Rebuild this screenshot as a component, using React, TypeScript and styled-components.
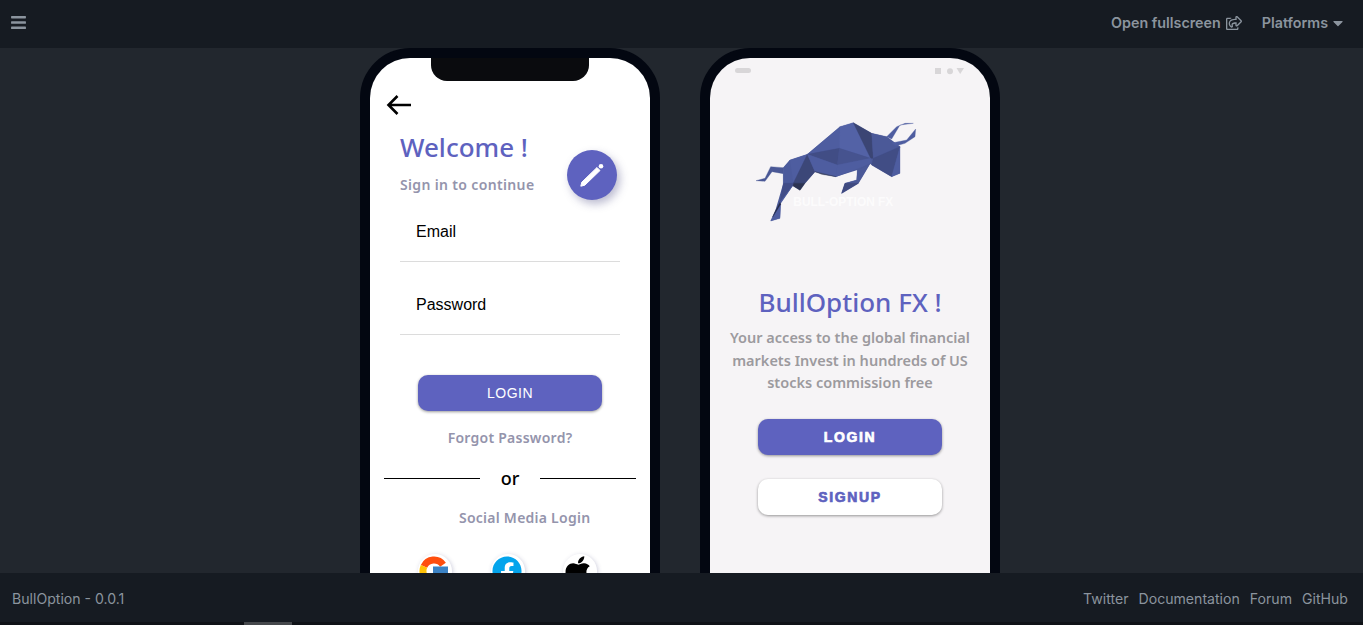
import styled, { createGlobalStyle } from 'styled-components';
import { FaApple, FaBars, FaCaretDown, FaFacebook, FaRegShareSquare } from 'react-icons/fa';

const GlobalStyle = createGlobalStyle`
  html, body { margin: 0; height: 100%; background: #22272e; }
  * { box-sizing: border-box; }
`;

const Page = styled.div`
  height: 625px;
  display: flex;
  flex-direction: column;
  overflow: hidden;
  font-family: Inter, 'Liberation Sans', sans-serif;
`;

const Header = styled.header`
  flex: 0 0 48px;
  background: #161b22;
  display: flex;
  align-items: center;
  justify-content: space-between;
  padding: 0 17px 3px 10px;
  color: #8b949e;
`;

const HeaderLinks = styled.nav`
  display: flex;
  align-items: center;
  gap: 20px;
`;

const HeaderLink = styled.span<{ $gap: number }>`
  display: flex;
  align-items: center;
  gap: ${p => p.$gap}px;
  font-size: 14.3px;
  font-weight: 600;
`;

const Stage = styled.main`
  flex: 1;
  min-height: 0;
  display: flex;
  justify-content: center;
  gap: 40px;
  padding-right: 3px;
  overflow: hidden;
`;

const Phone = styled.div`
  position: relative;
  flex: 0 0 300px;
  height: 620px;
  padding: 10px;
  background: #030711;
  border-radius: 50px;
`;

const Screen = styled.div<{ $bg: string }>`
  height: 100%;
  border-radius: 40px;
  background: ${p => p.$bg};
  font-family: 'Noto Sans', 'Open Sans', sans-serif;
`;

const Notch = styled.div`
  position: absolute;
  top: 10px;
  left: 71px;
  width: 158px;
  height: 23px;
  background: #0a0b0e;
  border-radius: 0 0 16px 16px;
`;

const LoginScreen = styled(Screen)`
  padding: 36px 0 0;
`;

const BackIcon = styled.svg`
  display: block;
  margin-left: 16px;
`;

const Intro = styled.div`
  margin: 14px 0 0 30px;
`;

const Welcome = styled.h1`
  margin: 0;
  font-size: 26px;
  line-height: 34px;
  font-weight: 500;
  color: #5e62bf;
`;

const Subtle = styled.p`
  margin: 0;
  font-size: 14px;
  font-weight: 600;
  letter-spacing: 0.25px;
  color: #9494ac;
`;

const SignIn = styled(Subtle)`
  margin-top: 11px;
  line-height: 20px;
  letter-spacing: 0.35px;
`;

const Fab = styled.div`
  position: absolute;
  top: 102px;
  left: 207px;
  width: 50px;
  height: 50px;
  border-radius: 50%;
  background: #5e62bf;
  box-shadow: 3px 4px 8px rgba(60, 60, 120, 0.35);
  display: flex;
  align-items: center;
  justify-content: center;
`;

const Field = styled.div`
  margin: 0 30px;
  padding: 0 16px;
  display: flex;
  align-items: center;
  border-bottom: 1px solid #dcdcdc;
  font-family: 'Liberation Sans', Arial, sans-serif;
  font-size: 16px;
  color: #000;
`;

const FirstField = styled(Field)`
  height: 67px;
  padding-top: 7px;
`;

const LastField = styled(Field)`
  height: 73px;
  padding-top: 14px;
`;

const Button = styled.div`
  width: 184px;
  height: 36px;
  border-radius: 10px;
  display: flex;
  align-items: center;
  justify-content: center;
  box-shadow: 0 1px 3px rgba(0, 0, 0, 0.4);
`;

const PlainButton = styled(Button)`
  margin: 40px auto 0;
  background: #5e62bf;
  color: #fff;
  font-family: 'Liberation Sans', Arial, sans-serif;
  font-size: 14px;
  letter-spacing: 0.5px;
`;

const Forgot = styled(Subtle)`
  margin-top: 17px;
  line-height: 20px;
  text-align: center;
`;

const OrRow = styled.div`
  margin: 20px 14px 0;
  display: grid;
  grid-template-columns: 96px 1fr 96px;
  align-items: center;
  font-size: 18px;
  line-height: 20px;
  font-weight: 500;
  text-align: center;
  color: #000;
`;

const OrLine = styled.div`
  height: 1px;
  background: #000;
`;

const SocialTitle = styled(Subtle)`
  margin: 20px 0 0 89px;
  line-height: 20px;
`;

const SocialRow = styled.div`
  margin: 27px 0 0 48px;
  display: flex;
  gap: 38.5px;
`;

const SocialBadge = styled.div`
  width: 34px;
  height: 34px;
  padding-left: 1px;
  border-radius: 50%;
  background: #fff;
  box-shadow: 1px 1px 4px rgba(60, 60, 120, 0.25);
  display: flex;
  align-items: center;
  margin-top: -1px;
`;

const AppleIcon = styled(FaApple)`
  flex: none;
  margin-left: -3px;
`;

const StatusBar = styled.div`
  height: 27px;
  padding: 10px 25px 0 25px;
  display: flex;
  justify-content: space-between;
  align-items: flex-start;
`;

const StatusPill = styled.div`
  width: 16px;
  height: 5px;
  border-radius: 3px;
  background: #d8d6d8;
`;

const StatusIcons = styled.svg`
  display: block;
`;

const Bull = styled.svg`
  display: block;
  margin: 30px 0 0 40px;
`;

const Title = styled.h2`
  margin: 55px 0 0;
  font-size: 26px;
  line-height: 34px;
  font-weight: 500;
  text-align: center;
  color: #5e62bf;
`;

const Blurb = styled.p`
  margin: 7px 15px 0;
  padding-bottom: 1px;
  font-size: 14.5px;
  line-height: 22.5px;
  font-weight: 600;
  text-align: center;
  color: #9c9a9e;
`;

const HeavyButton = styled(Button)<{ $light?: boolean }>`
  margin: 24px auto 0;
  background: ${p => (p.$light ? '#fff' : '#5e62bf')};
  color: ${p => (p.$light ? '#5e62bf' : '#fff')};
  font-family: 'Liberation Sans', Arial, sans-serif;
  font-size: 14px;
  font-weight: 700;
  letter-spacing: 1.6px;
  -webkit-text-stroke: 0.7px currentColor;
`;

const Footer = styled.footer`
  flex: 0 0 49px;
  background: #161b22;
  display: flex;
  align-items: center;
  justify-content: space-between;
  padding: 2px 15px 0 12px;
  font-size: 14.1px;
  color: #8b949e;
`;

const FooterLinks = styled.nav`
  display: flex;
  gap: 10px;
`;

const ScrollTrack = styled.div`
  flex: 0 0 3px;
  padding-left: 244px;
  background: #0f1217;
`;

const ScrollThumb = styled.div`
  width: 48px;
  height: 100%;
  background: #45484c;
`;

const silhouette =
  '100,158 120,135 172,118 270,35 310,23 365,55 410,65 450,95 450,175 425,185 365,150 360,146 340,180 325,205 275,235 285,205 320,195 322,165 258,185 195,170 165,205 150,226 128,212 92,265 90,310 62,318 75,290 100,205';

const facets: [string, string][] = [
  ['18,197 45,190 62,155 100,158 100,176 66,170 45,199', '#4a5896'],
  ['100,158 120,135 130,205 100,205', '#4b5a9c'],
  ['120,135 172,118 130,205', '#4e5da0'],
  ['172,118 195,170 165,205 130,205', '#3c4778'],
  ['130,205 165,205 150,226 128,212', '#2d3452'],
  ['100,205 130,205 128,212 90,262', '#414d88'],
  ['128,212 90,262 75,290 62,318 90,310 92,265', '#4e5da0'],
  ['75,290 90,262 92,268 68,306', '#232a48'],
  ['172,118 270,35 268,100', '#4e5da0'],
  ['270,35 310,23 362,130 268,100', '#5362a6'],
  ['310,23 365,55 370,130 362,130', '#3b4574'],
  ['172,118 268,100 262,150', '#414d85'],
  ['172,118 262,150 258,185 195,170', '#4e5da0'],
  ['195,170 258,185 215,178', '#2f3757'],
  ['268,100 362,130 262,150', '#46538f'],
  ['262,150 362,130 360,146 258,185', '#4e5da0'],
  ['360,146 340,180 325,205 275,235 285,205 320,195 322,165', '#4b5998'],
  ['285,205 325,205 275,235', '#3f4a80'],
  ['365,55 410,65 450,95 370,130', '#4b5998'],
  ['370,130 450,95 425,185 365,150', '#414d85'],
  ['450,95 450,175 425,185', '#4e5da0'],
  ['410,65 440,35 465,25 490,25 450,30 425,72', '#4e5da0'],
  ['425,84 470,75 497,42 495,65 465,85 437,93', '#4e5da0'],
];

const App = () => (
  <Page>
    <GlobalStyle />
    <Header>
      <FaBars size={17} />
      <HeaderLinks>
        <HeaderLink $gap={5}>
          Open fullscreen <FaRegShareSquare size={16} />
        </HeaderLink>
        <HeaderLink $gap={2}>
          Platforms <FaCaretDown size={16} />
        </HeaderLink>
      </HeaderLinks>
    </Header>
    <Stage>
      <Phone>
        <LoginScreen $bg='#fff'>
          <BackIcon width='26' height='22' viewBox='0 0 26 22' fill='none' stroke='#000' strokeWidth='2.6'>
            <path d='M25 11H3M11.5 2L2.5 11L11.5 20' />
          </BackIcon>
          <Intro>
            <Welcome>Welcome !</Welcome>
            <SignIn>Sign in to continue</SignIn>
          </Intro>
          <FirstField>Email</FirstField>
          <LastField>Password</LastField>
          <PlainButton>LOGIN</PlainButton>
          <Forgot>Forgot Password?</Forgot>
          <OrRow>
            <OrLine />
            or
            <OrLine />
          </OrRow>
          <SocialTitle>Social Media Login</SocialTitle>
          <SocialRow>
            <SocialBadge>
              <svg width='30' height='30' viewBox='0 0 30 30' fill='none' strokeWidth='7'>
                <path d='M5 10.4A11 11 0 0 1 24 8.7' stroke='#ff4e0e' />
                <path d='M5 10.4A11 11 0 0 0 5 19.6' stroke='#ffc107' />
                <path d='M5 19.6A11 11 0 0 0 24 21.3' stroke='#4caf50' />
                <rect x='14' y='10.5' width='15' height='8' fill='#3b82c4' />
              </svg>
            </SocialBadge>
            <SocialBadge>
              <FaFacebook size={30} color='#03a4ec' />
            </SocialBadge>
            <SocialBadge>
              <AppleIcon size={34} color='#000' />
            </SocialBadge>
          </SocialRow>
        </LoginScreen>
        <Notch />
        <Fab>
          <svg width='24' height='24' viewBox='0 0 24 24' fill='#fff'>
            <path d='M0.8 23.2L1.8 19.2L17 4.5L20 7.5L4.8 22.2Z' stroke='#fff' strokeLinejoin='round' />
            <circle cx='21' cy='3.2' r='2.3' />
          </svg>
        </Fab>
      </Phone>
      <Phone>
        <Screen $bg='#f6f4f6'>
          <StatusBar>
            <StatusPill />
            <StatusIcons width='30' height='7' viewBox='0 0 30 7' fill='#d8d6d8'>
              <rect x='0' y='0' width='6' height='6' />
              <circle cx='15' cy='3.2' r='3' />
              <path d='M21.5 0H29L25.2 6Z' />
            </StatusIcons>
          </StatusBar>
          <Bull width='175' height='115' viewBox='0 0 525 345'>
            <polygon points={silhouette} fill='#4b5998' />
            {facets.map(([points, fill]) => (
              <polygon key={points} points={points} fill={fill} stroke={fill} strokeWidth='1' />
            ))}
            <text
              x='130'
              y='272'
              fill='#fff'
              fillOpacity='0.7'
              fontFamily='Liberation Sans, sans-serif'
              fontSize='36'
              fontWeight='700'
              textLength='300'
              lengthAdjust='spacingAndGlyphs'
            >
              BULL-OPTION FX
            </text>
          </Bull>
          <Title>BullOption FX !</Title>
          <Blurb>
            Your access to the global financial markets Invest in hundreds of US stocks commission free
          </Blurb>
          <HeavyButton>LOGIN</HeavyButton>
          <HeavyButton $light>SIGNUP</HeavyButton>
        </Screen>
      </Phone>
    </Stage>
    <Footer>
      BullOption - 0.0.1
      <FooterLinks>
        <span>Twitter</span>
        <span>Documentation</span>
        <span>Forum</span>
        <span>GitHub</span>
      </FooterLinks>
    </Footer>
    <ScrollTrack>
      <ScrollThumb />
    </ScrollTrack>
  </Page>
);

export default App;
